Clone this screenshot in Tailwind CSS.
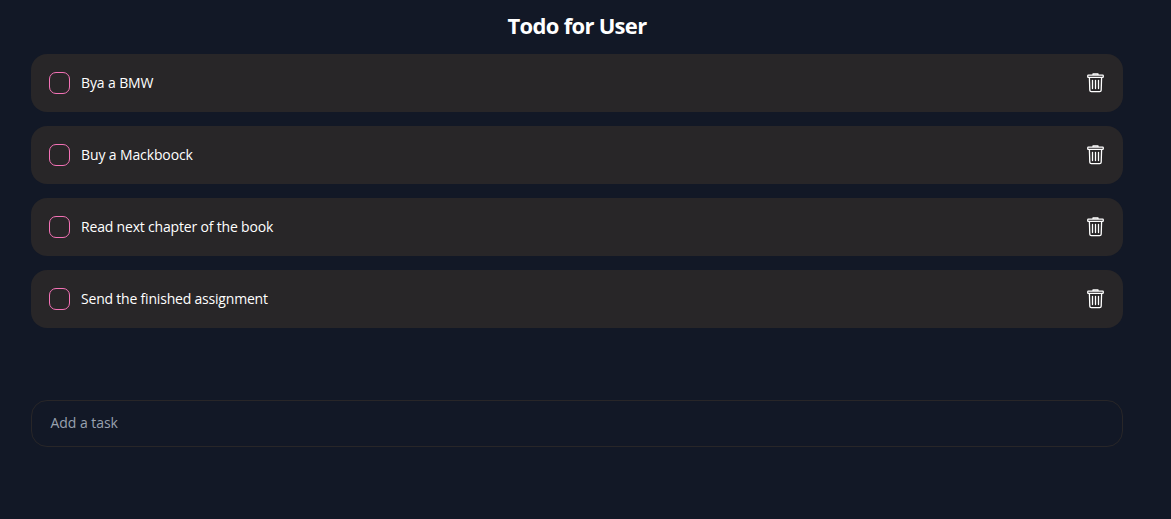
<!DOCTYPE html>
<html lang="en">
<head>
<meta charset="utf-8">
<title>Todo</title>
<script src="https://cdn.jsdelivr.net/npm/@tailwindcss/browser@4"></script>
</head>
<body class="h-screen overflow-hidden bg-[#121826] pl-[31px] pr-12 pt-[9px] font-['Open_Sans',sans-serif] text-white">
<svg class="hidden"><symbol id="trash" viewBox="0 0 17 20"><g fill="none" stroke="currentColor" stroke-width="1.3" stroke-linejoin="round"><path d="M6 2V1h5v1"/><rect x=".75" y="2.15" width="15.5" height="2.3" rx=".6"/><path d="M2.4 4.5l.4 12.6q.1 1.5 1.5 1.5h8.4q1.4 0 1.5-1.5l.4-12.6"/><path stroke-linecap="round" d="M5.5 7.3v8.2M8.5 7.3v8.2M11.5 7.3v8.2"/></g></symbol></svg>
<h1 class="mb-[13px] h-8 text-center text-[22px] leading-8 font-bold tracking-[-0.7px]"><span class="inline-block whitespace-nowrap">Todo for User</span></h1>
<ul class="flex flex-col gap-[14px]">
<li class="flex h-[58px] items-center rounded-2xl bg-[#282628] pr-[19px] pl-[18px]"><span class="mr-[11px] h-[22px] w-[21px] rounded-[7px] border border-[#f472b6]"></span><span class="text-sm tracking-[-0.12px]">Bya a BMW</span><svg class="mb-px ml-auto h-5 w-[17px]"><use href="#trash"/></svg></li>
<li class="flex h-[58px] items-center rounded-2xl bg-[#282628] pr-[19px] pl-[18px]"><span class="mr-[11px] h-[22px] w-[21px] rounded-[7px] border border-[#f472b6]"></span><span class="text-sm tracking-[-0.12px]">Buy a Mackboock</span><svg class="mb-px ml-auto h-5 w-[17px]"><use href="#trash"/></svg></li>
<li class="flex h-[58px] items-center rounded-2xl bg-[#282628] pr-[19px] pl-[18px]"><span class="mr-[11px] h-[22px] w-[21px] rounded-[7px] border border-[#f472b6]"></span><span class="text-sm tracking-[-0.18px]">Read next chapter of the book</span><svg class="mb-px ml-auto h-5 w-[17px]"><use href="#trash"/></svg></li>
<li class="flex h-[58px] items-center rounded-2xl bg-[#282628] pr-[19px] pl-[18px]"><span class="mr-[11px] h-[22px] w-[21px] rounded-[7px] border border-[#f472b6]"></span><span class="text-sm tracking-[-0.2px]">Send the finished assignment</span><svg class="mb-px ml-auto h-5 w-[17px]"><use href="#trash"/></svg></li>
</ul>
<div class="mt-[72px] flex h-[47px] items-center rounded-2xl border border-[#282628] pr-[18px] pb-px pl-[18.5px] text-sm tracking-[-0.05px] text-gray-400">Add a task</div>
</body>
</html>
